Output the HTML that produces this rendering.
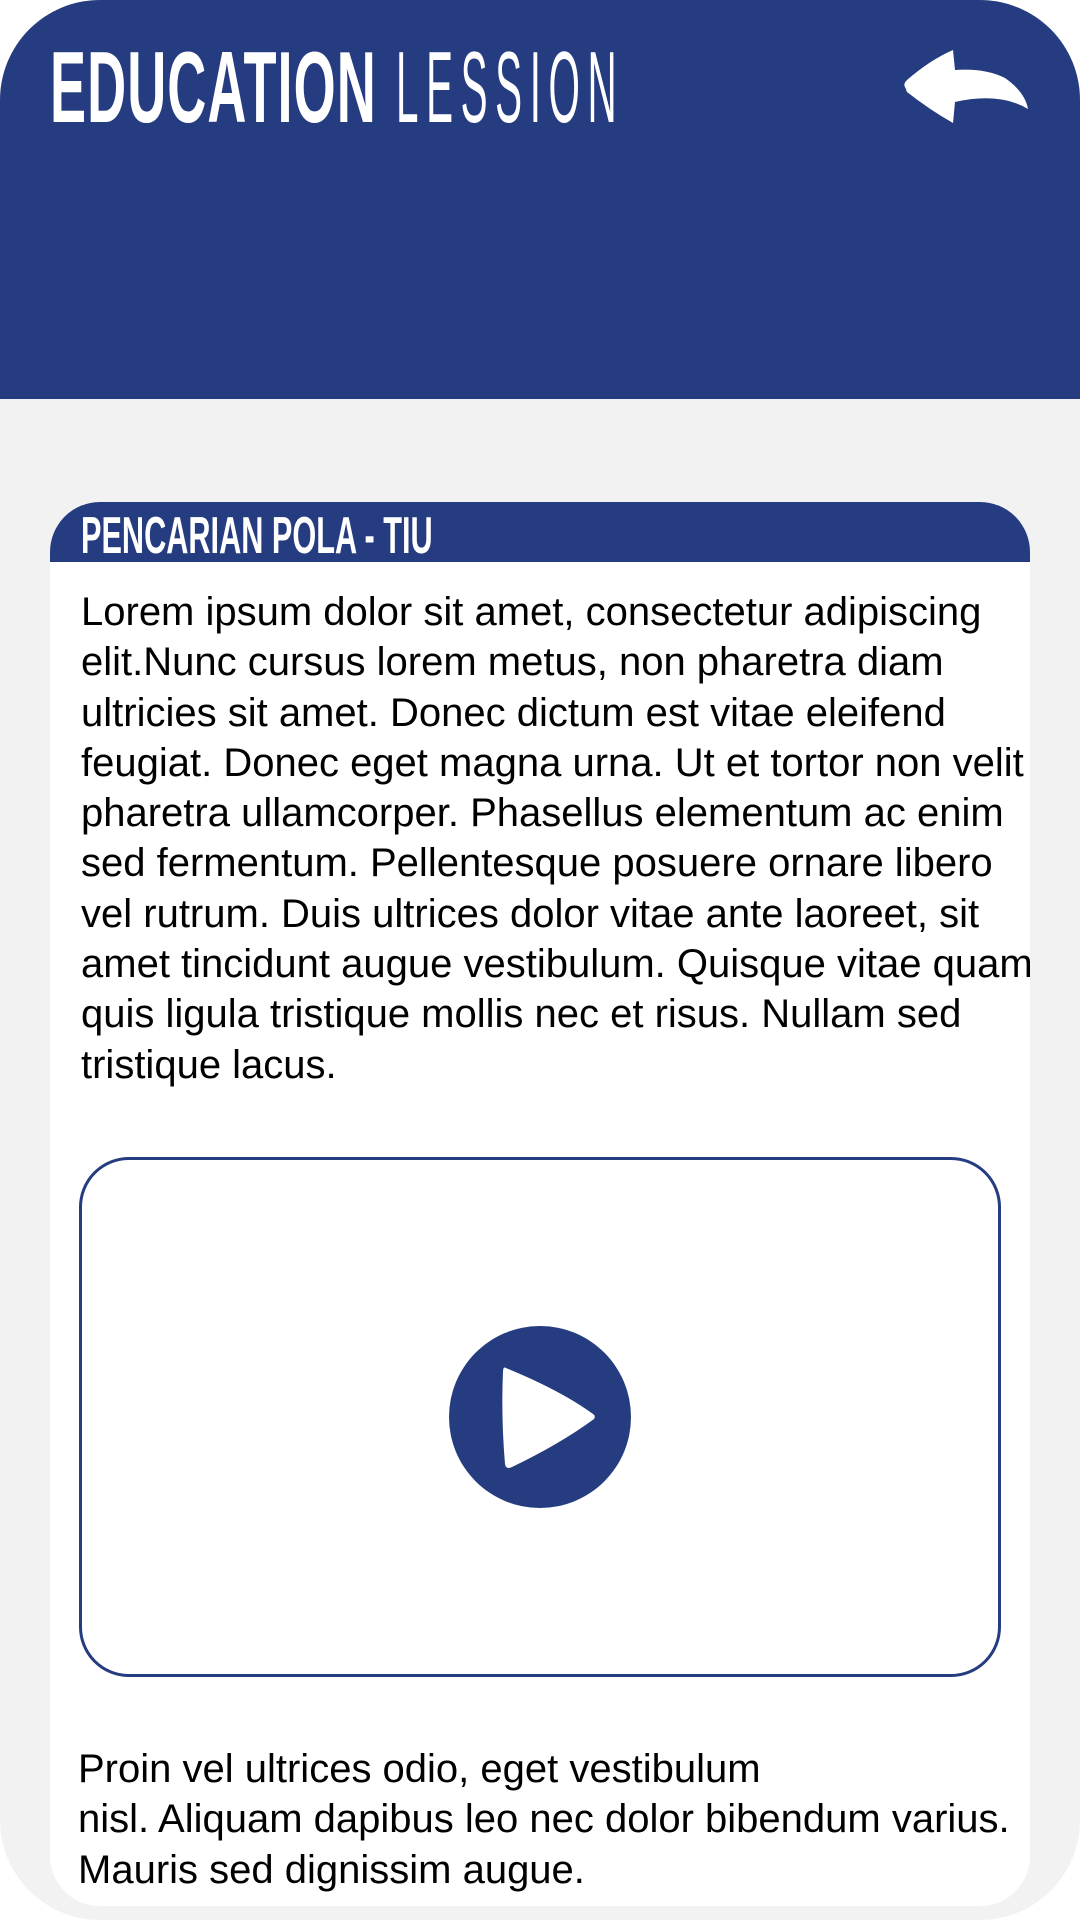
<!DOCTYPE html>
<html><head><meta charset="utf-8"><style>
*{margin:0;padding:0;box-sizing:border-box}
html,body{width:1080px;height:1920px;overflow:hidden;background:#fff}
.page{position:absolute;left:0;top:0;width:1080px;height:1920px;background:#f2f2f2;border-radius:100px;overflow:hidden}
.header{position:absolute;left:0;top:0;width:1080px;height:399px;background:#253d80}
.t1{position:absolute;left:50px;top:38px;font:bold 101px/1 "Liberation Sans",sans-serif;color:#fff;transform:scaleX(0.535);transform-origin:0 0;white-space:nowrap;letter-spacing:2px}
.t2{position:absolute;left:396px;top:38px;font:normal 101px/1 "Liberation Sans",sans-serif;color:#fff;transform:scaleX(0.40);transform-origin:0 0;white-space:nowrap;letter-spacing:19px}
.card{position:absolute;left:50px;top:502px;width:980px;height:1404px;background:#fff;border-radius:50px;overflow:hidden}
.ch{position:absolute;left:0;top:0;width:980px;height:60px;background:#253d80}
.ct{position:absolute;left:31px;top:8px;font:bold 52px/1 "Liberation Sans",sans-serif;color:#fff;transform:scaleX(0.59);transform-origin:0 0;white-space:nowrap}
.txt{position:absolute;font:40px/50.3px "Liberation Sans",sans-serif;color:#000;white-space:nowrap}
.video{position:absolute;left:29px;top:655px;width:922px;height:520px;border:3px solid #253d80;border-radius:50px}
</style></head><body>
<div class="page">
<div class="header">
<div class="t1">EDUCATION</div>
<div class="t2">LESSION</div>
<svg style="position:absolute;left:0;top:0" width="1080" height="200">
<path d="M905 87 Q903 84 907 80 Q930 60 953 50 L955 70 Q985 68 1005 78 Q1025 92 1028 109 Q1000 92 955 102 L953 123 Q930 110 907 92 Z" fill="#fff"/>
</svg>
</div>
<div class="card">
<div class="ch"><div class="ct">PENCARIAN POLA - TIU</div></div>
<div class="txt" style="left:31px;top:85px">Lorem ipsum dolor sit amet, consectetur adipiscing<br>elit.Nunc cursus lorem metus, non pharetra diam<br>ultricies sit amet. Donec dictum est vitae eleifend<br>feugiat. Donec eget magna urna. Ut et tortor non velit<br>pharetra ullamcorper. Phasellus elementum ac enim<br>sed fermentum. Pellentesque posuere ornare libero<br>vel rutrum. Duis ultrices dolor vitae ante laoreet, sit<br>amet tincidunt augue vestibulum. Quisque vitae quam<br>quis ligula tristique mollis nec et risus. Nullam sed<br>tristique lacus.</div>
<div class="video"></div>
<svg style="position:absolute;left:0;top:0" width="980" height="1404">
<circle cx="490" cy="915" r="91" fill="#253d80"/>
<path d="M456 866 Q453 864 453 870 Q451 915 455 962 Q456 968 462 965 Q510 942 544 917 Q546 914 543 912 Q510 888 456 866 Z" fill="#fff"/>
</svg>
<div class="txt" style="left:28px;top:1242px">Proin vel ultrices odio, eget vestibulum<br>nisl. Aliquam dapibus leo nec dolor bibendum varius.<br>Mauris sed dignissim augue.</div>
</div>
</div>
</body></html>
